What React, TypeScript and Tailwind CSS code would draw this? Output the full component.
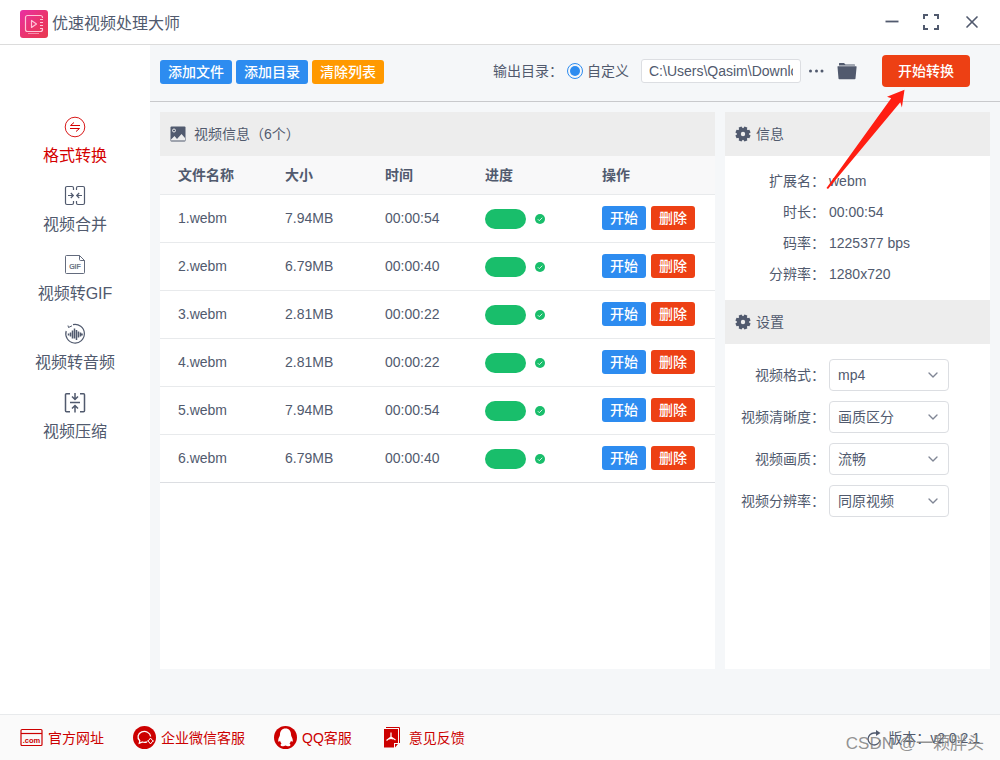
import React, { useState } from "react";
import { ChevronDown, X } from "lucide-react";

const videos = [
  { name: "1.webm", size: "7.94MB", time: "00:00:54" },
  { name: "2.webm", size: "6.79MB", time: "00:00:40" },
  { name: "3.webm", size: "2.81MB", time: "00:00:22" },
  { name: "4.webm", size: "2.81MB", time: "00:00:22" },
  { name: "5.webm", size: "7.94MB", time: "00:00:54" },
  { name: "6.webm", size: "6.79MB", time: "00:00:40" },
];

const details = [
  { label: "扩展名：", value: "webm" },
  { label: "时长：", value: "00:00:54" },
  { label: "码率：", value: "1225377 bps" },
  { label: "分辨率：", value: "1280x720" },
];

const settings = [
  { id: "format", label: "视频格式：", options: ["mp4", "avi", "mov"] },
  { id: "clarity", label: "视频清晰度：", options: ["画质区分", "高清"] },
  { id: "quality", label: "视频画质：", options: ["流畅", "标准"] },
  { id: "resolution", label: "视频分辨率：", options: ["同原视频", "1280x720"] },
];

const Logo = () => (
  <svg width="28" height="28" viewBox="0 0 28 28">
    <defs>
      <linearGradient id="logo" x1="0" y1="0" x2="1" y2="1">
        <stop offset="0" stopColor="#e92fa4" />
        <stop offset="0.6" stopColor="#ea3568" />
        <stop offset="1" stopColor="#e8384f" />
      </linearGradient>
    </defs>
    <rect width="28" height="28" rx="3" fill="url(#logo)" />
    <g fill="none" stroke="#ffc4d6" strokeWidth="1.200">
      <path d="M22.500 8V7.500a2 2 0 0 0-2-2H7.500a2 2 0 0 0-2 2v12a2 2 0 0 0 2 2h13a2 2 0 0 0 2-2V19" />
      <path d="M11.500 10.500v7l5-3.500z" strokeLinejoin="round" />
      <path d="M20 9.500h3M20 12.500h3M20 15.500h3M20 18.500h3" />
      <path d="M8 23.500h11" strokeWidth="0.600" />
    </g>
  </svg>
);

const ConvertIcon = () => (
  <svg width="22" height="22" viewBox="0 0 22 22" fill="none" stroke="currentColor">
    <circle cx="11" cy="11" r="9.800" strokeWidth="0.900" />
    <path d="M16 9.500H6.500l3.500-3M6 12.500h9.500l-3.500 3" />
  </svg>
);

const MergeIcon = () => (
  <svg width="22" height="22" viewBox="0 0 22 22" fill="none" stroke="currentColor" strokeWidth="1.200">
    <path d="M9.500 5V3A1.500 1.500 0 0 0 8 1.500H3A1.500 1.500 0 0 0 1.500 3v15A1.500 1.500 0 0 0 3 19.500h5A1.500 1.500 0 0 0 9.500 18v-2" />
    <path d="M12.500 5V3A1.500 1.500 0 0 1 14 1.500h5A1.500 1.500 0 0 1 20.500 3v15a1.500 1.500 0 0 1-1.500 1.500h-5a1.500 1.500 0 0 1-1.500-1.500v-2" />
    <path d="M4 10.500h5M6.800 8 9.300 10.500 6.800 13M18 10.500h-5M15.200 8l-2.500 2.500 2.500 2.500" />
  </svg>
);

const GifIcon = () => (
  <svg width="22" height="22" viewBox="0 0 22 22" fill="none" stroke="currentColor" strokeWidth="0.900">
    <path d="M15.500 1.500H2.500a1 1 0 0 0-1 1v16a1 1 0 0 0 1 1h17a1 1 0 0 0 1-1v-12l-5-5v4a1 1 0 0 0 1 1h4" />
    <text x="11" y="15" textAnchor="middle" fontSize="7" fill="currentColor" strokeWidth="0.200">
      GIF
    </text>
  </svg>
);

const AudioIcon = () => (
  <svg width="22" height="22" viewBox="0 0 22 22" fill="none" stroke="currentColor">
    <path d="M9 1.700A9.300 9.300 0 1 1 2.200 8" strokeWidth="1.200" />
    <path d="M4.500 4.500 8 2.800M4 2.500l.5 2" />
    <path d="M4.500 10.500v2M6.500 9.500v4M8.500 7.500v8M10.500 5.500v10M12.500 7v10M14.500 8.500v6M16.500 9.500v4M18 10.500v2" strokeWidth="1.500" />
  </svg>
);

const CompressIcon = () => (
  <svg width="22" height="22" viewBox="0 0 22 22" fill="none" stroke="currentColor" strokeWidth="1.500">
    <path d="M6 1.800H2.500a1 1 0 0 0-1 1v16a1 1 0 0 0 1 1H6M16 1.800h3.500a1 1 0 0 1 1 1v16a1 1 0 0 1-1 1H16" />
    <path d="M6 10.500h10M11 1v6M8 4.500l3 3 3-3M11 20.500v-6M8 16.500l3-3 3 3" />
  </svg>
);

const menu = [
  { label: "格式转换", icon: <ConvertIcon /> },
  { label: "视频合并", icon: <MergeIcon /> },
  { label: "视频转GIF", icon: <GifIcon /> },
  { label: "视频转音频", icon: <AudioIcon /> },
  { label: "视频压缩", icon: <CompressIcon /> },
];

const GearIcon = () => (
  <svg width="16" height="16" viewBox="0 0 16 16">
    <g fill="currentColor" transform="translate(8 8)">
      <circle r="6.100" />
      {[22.5, 67.5, 112.5, 157.5, 202.5, 247.5, 292.5, 337.5].map((angle) => (
        <path key={angle} d="M-2-5 -1.500-7.600H1.500L2-5z" transform={`rotate(${angle})`} />
      ))}
      <circle r="2.200" fill="#ededed" />
    </g>
  </svg>
);

const PictureIcon = () => (
  <svg width="16" height="16" viewBox="0 0 16 16">
    <rect x="0.500" y="0.500" width="15" height="15" rx="1" fill="#515a6e" />
    <circle cx="4" cy="4.500" r="1.500" fill="none" stroke="#ededed" />
    <path d="M1 13.500 4.500 10l2.500 3 4.500-5 3.500 4v2.500H1z" fill="#ededed" />
  </svg>
);

const FolderIcon = () => (
  <svg width="20" height="18" viewBox="0 0 20 18" fill="#515a6e">
    <path d="M2 3.500V1.500Q2 1 2.500 1H7l1.500 1.500h9q.5 0 .5.500v.5z" />
    <path d="M0.500 5q-.3-.8.500-.8h18q.8 0 .6.800L18.500 16.500q-.1.700-.8.700H2.300q-.7 0-.8-.7z" />
  </svg>
);

const WebsiteIcon = () => (
  <svg width="23" height="23" viewBox="0 0 23 23">
    <rect x="1" y="3.500" width="21" height="16" rx="1" fill="none" stroke="#c00" strokeWidth="1.200" />
    <path d="M1 7.500h21" stroke="#c00" strokeWidth="1.200" />
    <text x="11.500" y="17" textAnchor="middle" fontSize="7.500" fontWeight="bold" fill="#c00">
      .com
    </text>
  </svg>
);

const WechatIcon = () => (
  <svg width="23" height="23" viewBox="0 0 23 23" fill="none" stroke="#fff">
    <circle cx="11.500" cy="11.500" r="11.500" fill="#c00" stroke="none" />
    <path d="M14 15.800a7 7 0 0 1-4.500.2L6.300 17.300l.5-2.500a6.300 5.500 0 1 1 10.800-4.300" strokeWidth="1.300" />
    <path d="m17.500 12 1.200 1.800 1.800 1.200-1.800 1.200-1.200 1.800-1.200-1.800-1.800-1.200 1.800-1.200z" />
  </svg>
);

const QqIcon = () => (
  <svg width="23" height="23" viewBox="0 0 23 23">
    <circle cx="11.500" cy="11.500" r="11.500" fill="#c00" />
    <path
      d="M11.500 2.500C7.800 2.500 6 5.200 6 8.500c0 2-1.800 3.500-1.800 6 0 1.500.8 1.500 1.800.3.300 1.200.8 2 1.500 2.700-1.500.8-1.200 2.800.8 2.800 1.500 0 2.500-.4 3.200-.8.700.4 1.700.8 3.200.8 2 0 2.300-2 .8-2.800.7-.7 1.200-1.500 1.500-2.700 1 1.200 1.800 1.200 1.800-.3 0-2.500-1.800-4-1.800-6 0-3.300-1.800-6-5.500-6z"
      fill="#fff"
    />
  </svg>
);

const FeedbackIcon = () => (
  <svg width="23" height="23" viewBox="0 0 23 23">
    <path d="M5 1.500h13.500V17" fill="none" stroke="#c00" />
    <path d="M3 3h14v14h-4v4.500H3z" fill="#c00" />
    <path d="M14 21.500V18h3z" fill="#c00" />
    <path d="M10 6.500v5M10 11l-4.500 3.500M10 11l4.500 3M8 13q2-1 4 0" fill="none" stroke="#fff" strokeWidth="1.200" />
  </svg>
);

const links = [
  { label: "官方网址", icon: <WebsiteIcon /> },
  { label: "企业微信客服", icon: <WechatIcon /> },
  { label: "QQ客服", icon: <QqIcon /> },
  { label: "意见反馈", icon: <FeedbackIcon /> },
];

const App: React.FC = () => {
  const [active, setActive] = useState("格式转换");
  const [path, setPath] = useState("C:\\Users\\Qasim\\Downloads");

  return (
    <div className="flex min-h-screen flex-col bg-[#f5f7f9] font-['Liberation_Sans','Noto_Sans_CJK_SC',sans-serif] text-sm text-[#515a6e]">
      {/* Title bar */}
      <header className="flex h-[45px] items-center justify-between border-b border-[#dcdcdc] bg-white pr-[18px] pl-5">
        <div className="flex items-center gap-1 pt-1">
          <Logo />
          <h1 className="text-base leading-6">优速视频处理大师</h1>
        </div>
        <div className="flex items-center gap-[22px]">
          <button aria-label="最小化" className="flex w-4 justify-center">
            <svg width="14" height="16" viewBox="0 0 14 16">
              <path d="M0.500 7.500h13" stroke="#515a6e" strokeWidth="1.800" />
            </svg>
          </button>
          <button aria-label="全屏">
            <svg width="18" height="16" viewBox="0 0 18 16" fill="none" stroke="#515a6e" strokeWidth="2">
              <path d="M2 5V1h4M12 1h4v4M16 11v4h-4M6 15H2v-4" />
            </svg>
          </button>
          <button aria-label="关闭">
            <X size={20} strokeWidth={2} />
          </button>
        </div>
      </header>

      <div className="flex flex-1">
        {/* Sidebar */}
        <nav className="flex w-[150px] shrink-0 flex-col gap-[17px] bg-white pt-[71px]">
          {menu.map((item) => (
            <button
              key={item.label}
              onClick={() => setActive(item.label)}
              className={`flex flex-col items-center gap-1.5 text-base leading-6 ${
                active === item.label ? "text-[#d40000]" : ""
              }`}
            >
              {item.icon}
              <span>{item.label}</span>
            </button>
          ))}
        </nav>

        <main className="relative flex min-w-0 flex-1 flex-col">
          {/* Toolbar */}
          <div className="flex h-[57px] items-center justify-between border-b border-[#c8c9cc] pr-[30px] pb-1 pl-2.5">
            <div className="flex gap-1 pt-0.5 font-medium text-white">
              <button className="h-6 rounded-[3px] bg-[#2d8cf0] px-2">添加文件</button>
              <button className="h-6 rounded-[3px] bg-[#2d8cf0] px-2">添加目录</button>
              <button className="h-6 rounded-[3px] bg-[#ff9900] px-2">清除列表</button>
            </div>
            <div className="flex items-center">
              <span>输出目录：</span>
              <label className="ml-1 flex items-center gap-1">
                <input
                  type="radio"
                  name="output"
                  defaultChecked
                  className="size-4 appearance-none rounded-full border border-[#2d8cf0] bg-[#2d8cf0] bg-clip-content p-[2px]"
                />
                自定义
              </label>
              <input
                aria-label="输出目录"
                value={path}
                onChange={(e) => setPath(e.target.value)}
                className="ml-3 h-6 w-40 rounded-[3px] border border-[#dcdee2] bg-white px-[7px]"
              />
              <button aria-label="选择目录" className="ml-[7px]">
                <svg width="16" height="16" viewBox="0 0 16 16" fill="#515a6e">
                  <circle cx="2.500" cy="8" r="1.500" />
                  <circle cx="8.500" cy="8" r="1.500" />
                  <circle cx="14" cy="8" r="1.500" />
                </svg>
              </button>
              <button aria-label="打开目录" className="ml-[13px]">
                <FolderIcon />
              </button>
              <button className="ml-[25px] h-8 w-[88px] rounded bg-[#ed4014] font-medium text-white">开始转换</button>
            </div>
          </div>

          <div className="flex flex-1 gap-2.5 px-2.5 pt-2.5 pb-[45px]">
            {/* Video list */}
            <section className="min-w-0 flex-1 bg-white">
              <h2 className="flex h-11 items-center gap-2 bg-[#ededed] px-2.5">
                <PictureIcon />
                视频信息（6个）
              </h2>
              <table className="w-full table-fixed text-left">
                <thead className="bg-[#f8f8f9]">
                  <tr className="h-[38px] border-b border-[#e8eaec]">
                    <th className="w-[107px] pl-[18px]">文件名称</th>
                    <th className="w-[100px] pl-[18px]">大小</th>
                    <th className="w-[100px] pl-[18px]">时间</th>
                    <th className="w-[117px] pl-[18px]">进度</th>
                    <th className="pl-[18px]">操作</th>
                  </tr>
                </thead>
                <tbody>
                  {videos.map((video) => (
                    <tr key={video.name} className="h-12 border-b border-[#e8eaec] last:border-[#dcdee2]">
                      <td className="pl-[18px]">{video.name}</td>
                      <td className="pl-[18px]">{video.size}</td>
                      <td className="pl-[18px]">{video.time}</td>
                      <td className="pl-[18px]">
                        <div className="flex items-center gap-[9px] pt-0.5">
                          <div className="h-5 w-[41px] rounded-full bg-[#19be6b]" />
                          <svg width="10" height="10" viewBox="0 0 10 10">
                            <circle cx="5" cy="5" r="5" fill="#19be6b" />
                            <path d="M2.800 5.200 4.300 6.700 7.300 3.700" fill="none" stroke="#fff" strokeWidth="0.800" />
                          </svg>
                        </div>
                      </td>
                      <td className="pl-[18px]">
                        <div className="flex gap-[5px] font-medium text-white">
                          <button className="h-6 w-11 rounded-[3px] bg-[#2d8cf0]">开始</button>
                          <button className="h-6 w-11 rounded-[3px] bg-[#ed4014]">删除</button>
                        </div>
                      </td>
                    </tr>
                  ))}
                </tbody>
              </table>
            </section>

            {/* Info and settings */}
            <aside className="w-[265px] shrink-0 bg-white">
              <h2 className="flex h-11 items-center gap-[5px] bg-[#ededed] px-2.5">
                <GearIcon />
                信息
              </h2>
              <dl className="flex h-36 flex-col pt-[9px]">
                {details.map((item) => (
                  <div key={item.label} className="flex h-[31px] items-center gap-1">
                    <dt className="w-[100px] text-right">{item.label}</dt>
                    <dd>{item.value}</dd>
                  </div>
                ))}
              </dl>
              <h2 className="flex h-11 items-center gap-[5px] bg-[#ededed] px-2.5">
                <GearIcon />
                设置
              </h2>
              <div className="flex flex-col gap-2.5 pt-[15px]">
                {settings.map((item) => (
                  <div key={item.id} className="flex items-center gap-1">
                    <label htmlFor={item.id} className="w-[100px] text-right">
                      {item.label}
                    </label>
                    <div className="relative">
                      <select
                        id={item.id}
                        className="h-8 w-[120px] appearance-none rounded border border-[#dcdee2] bg-white px-2"
                      >
                        {item.options.map((option) => (
                          <option key={option}>{option}</option>
                        ))}
                      </select>
                      <ChevronDown
                        size={16}
                        className="pointer-events-none absolute top-2 right-2 text-[#808695]"
                      />
                    </div>
                  </div>
                ))}
              </div>
            </aside>
          </div>

          {/* Pointer to the start button */}
          <svg className="pointer-events-none absolute top-11 right-[94px]" width="80" height="101" viewBox="0 0 80 101">
            <path d="M78.500 0.800 61 7.700 65.200 9.200 0.500 99 2 100 74.300 13.300 75.900 18.500z" fill="#ff1e12" />
          </svg>
        </main>
      </div>

      {/* Footer */}
      <footer className="relative flex h-[46px] items-center justify-between border-t border-[#e8eaec] bg-[#fafafa] px-5">
        <div className="flex gap-[29px]">
          {links.map((link) => (
            <a key={link.label} href="#" className="flex items-center gap-[5px] text-[#c00]">
              {link.icon}
              {link.label}
            </a>
          ))}
        </div>
        <div className="flex items-center gap-1.5">
          <svg width="16" height="18" viewBox="0 0 16 18" fill="none" stroke="#515a6e" strokeWidth="1.300">
            <path d="M11 4H8a6 6 0 1 0 6 7" />
            <path d="M10 1v6l4.500-3z" fill="#515a6e" stroke="none" />
          </svg>
          版本：v2.0.2.1
        </div>
        <span className="pointer-events-none absolute right-4 bottom-1 text-[17px] leading-6 text-[#777]/80">
          CSDN @一颗胖头
        </span>
      </footer>
    </div>
  );
};

export default App;
